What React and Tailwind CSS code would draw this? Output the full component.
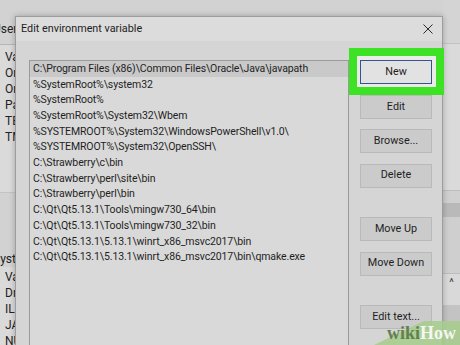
import React from 'react';

const paths = [
  'C:\\Program Files (x86)\\Common Files\\Oracle\\Java\\javapath',
  '%SystemRoot%\\system32',
  '%SystemRoot%',
  '%SystemRoot%\\System32\\Wbem',
  '%SYSTEMROOT%\\System32\\WindowsPowerShell\\v1.0\\',
  '%SYSTEMROOT%\\System32\\OpenSSH\\',
  'C:\\Strawberry\\c\\bin',
  'C:\\Strawberry\\perl\\site\\bin',
  'C:\\Strawberry\\perl\\bin',
  'C:\\Qt\\Qt5.13.1\\Tools\\mingw730_64\\bin',
  'C:\\Qt\\Qt5.13.1\\Tools\\mingw730_32\\bin',
  'C:\\Qt\\Qt5.13.1\\5.13.1\\winrt_x86_msvc2017\\bin',
  'C:\\Qt\\Qt5.13.1\\5.13.1\\winrt_x86_msvc2017\\bin\\qmake.exe',
];

const Btn = ({ children, className = '' }) => (
  <div
    className={`h-[24px] w-[72px] flex items-center justify-center bg-[#cbcbcb] border border-[#b9b9b9] text-[10.8px] text-[#1f1f1f] ${className}`}
  >
    {children}
  </div>
);

const App = () => {
  return (
    <div className="relative w-[460px] h-[345px] overflow-hidden bg-[#d2d2d2] font-['Roboto',sans-serif] text-[#222]">
      {/* Background window (behind the dialog) */}
      <div className="flex h-full">
        {/* left strip */}
        <div className="w-[15px] flex flex-col overflow-hidden text-[12px] leading-[16px] whitespace-nowrap">
          <div className="h-[21px] shrink-0" />
          <div className="h-[16px] shrink-0 -ml-[7px]">User</div>
          <div className="h-[8px] shrink-0 border-b border-[#b5b5b5]" />
          <div className="bg-[#dadada] pt-[4px] pl-[5px] h-[147px] shrink-0">
            <div>Var</div>
            <div>On</div>
            <div>On</div>
            <div>Pat</div>
            <div>TE</div>
            <div>TM</div>
          </div>
          <div className="h-[59px] shrink-0 border-t border-[#c4c4c4]" />
          <div className="h-[16px] shrink-0 -ml-[7px]">Syste</div>
          <div className="bg-[#dadada] pt-[2px] pl-[5px] flex-1">
            <div>Var</div>
            <div>Dri</div>
            <div>ILB</div>
            <div>JAV</div>
            <div>NU</div>
          </div>
        </div>
        <div className="flex-1" />
        {/* right strip */}
        <div className="w-[17px] flex flex-col">
          <div className="h-[43px] bg-[#d4d4d4]" />
          <div className="h-[147px] bg-[#dadada] border-t border-[#c2c2c2]" />
          <div className="h-[13px] bg-[#d0d0d0] border-t border-[#bdbdbd]" />
          <div className="h-[14px] bg-[#b9b9b9]" />
          <div className="h-[56px] bg-[#cfcfcf]" />
          <div className="h-[32px] bg-[#d9d9d9] border-t border-[#bdbdbd] flex justify-center pt-[2px] text-[11px] leading-[14px] text-[#444]">
            ^
          </div>
          <div className="flex-1 bg-[#c3c3c3]" />
        </div>
      </div>

      {/* Edit environment variable dialog */}
      <div className="absolute left-[15px] top-[16px] w-[428px] h-[340px] bg-[#d5d5d5] border border-[#9d9d9d] shadow-[0_0_6px_rgba(0,0,0,0.25)] flex flex-col">
        <div className="h-[24px] shrink-0 flex items-center justify-between pl-[5px] pr-[9px] bg-[#dcdcdc]">
          <span className="text-[10.8px] text-[#1d1d1d]">Edit environment variable</span>
          <svg width="10" height="10" viewBox="0 0 10 10">
            <path d="M0.5 0.5 L9.5 9.5 M9.5 0.5 L0.5 9.5" stroke="#2a2a2a" strokeWidth="1" fill="none" />
          </svg>
        </div>

        <div className="flex flex-1 pl-[13px] pt-[19px]">
          <div className="w-[320px] h-full border border-[#9a9a9a] bg-[#d9d9d9]">
            {paths.map((p, i) => (
              <div
                key={i}
                className={`h-[15.7px] flex items-center pl-[3px] text-[10.5px] tracking-[-0.12px] whitespace-nowrap text-[#1f1f1f] ${
                  i === 0 ? 'bg-[#c9c9c9]' : ''
                }`}
              >
                {p}
              </div>
            ))}
          </div>

          <div className="ml-[11px] flex flex-col">
            <div className="relative">
              <div className="absolute -left-[11px] -top-[12px] w-[95px] h-[47px] border-[8px] border-[#3de225] bg-[#ebebeb]" />
              <div className="relative h-[24px] w-[72px] flex items-center justify-center bg-[#e2e2e2] border-[1.5px] border-[#35558a] text-[10.8px] text-[#1f1f1f]">
                New
              </div>
            </div>
            <Btn className="mt-[11px]">Edit</Btn>
            <Btn className="mt-[10px]">Browse...</Btn>
            <Btn className="mt-[10.5px]">Delete</Btn>
            <Btn className="mt-[29.5px]">Move Up</Btn>
            <Btn className="mt-[10.5px]">Move Down</Btn>
            <Btn className="mt-[29.5px]">Edit text...</Btn>
          </div>
        </div>
      </div>

      {/* wikiHow watermark */}
      <div className="absolute right-0 bottom-0 w-[86px] h-[24px]">
        <svg className="absolute inset-0" width="86" height="24" viewBox="0 0 86 24">
          <polygon points="0,24 50,0 86,0 86,24" fill="#a6cc8c" fillOpacity="0.85" />
        </svg>
        <div className="relative flex items-center justify-end h-full pr-[4px] font-['Liberation_Serif',serif] font-bold text-[18px] leading-none">
          <span className="text-[#61804e]">wiki</span>
          <span className="text-[#f4f7f0]">How</span>
        </div>
      </div>
    </div>
  );
};

export default App;
